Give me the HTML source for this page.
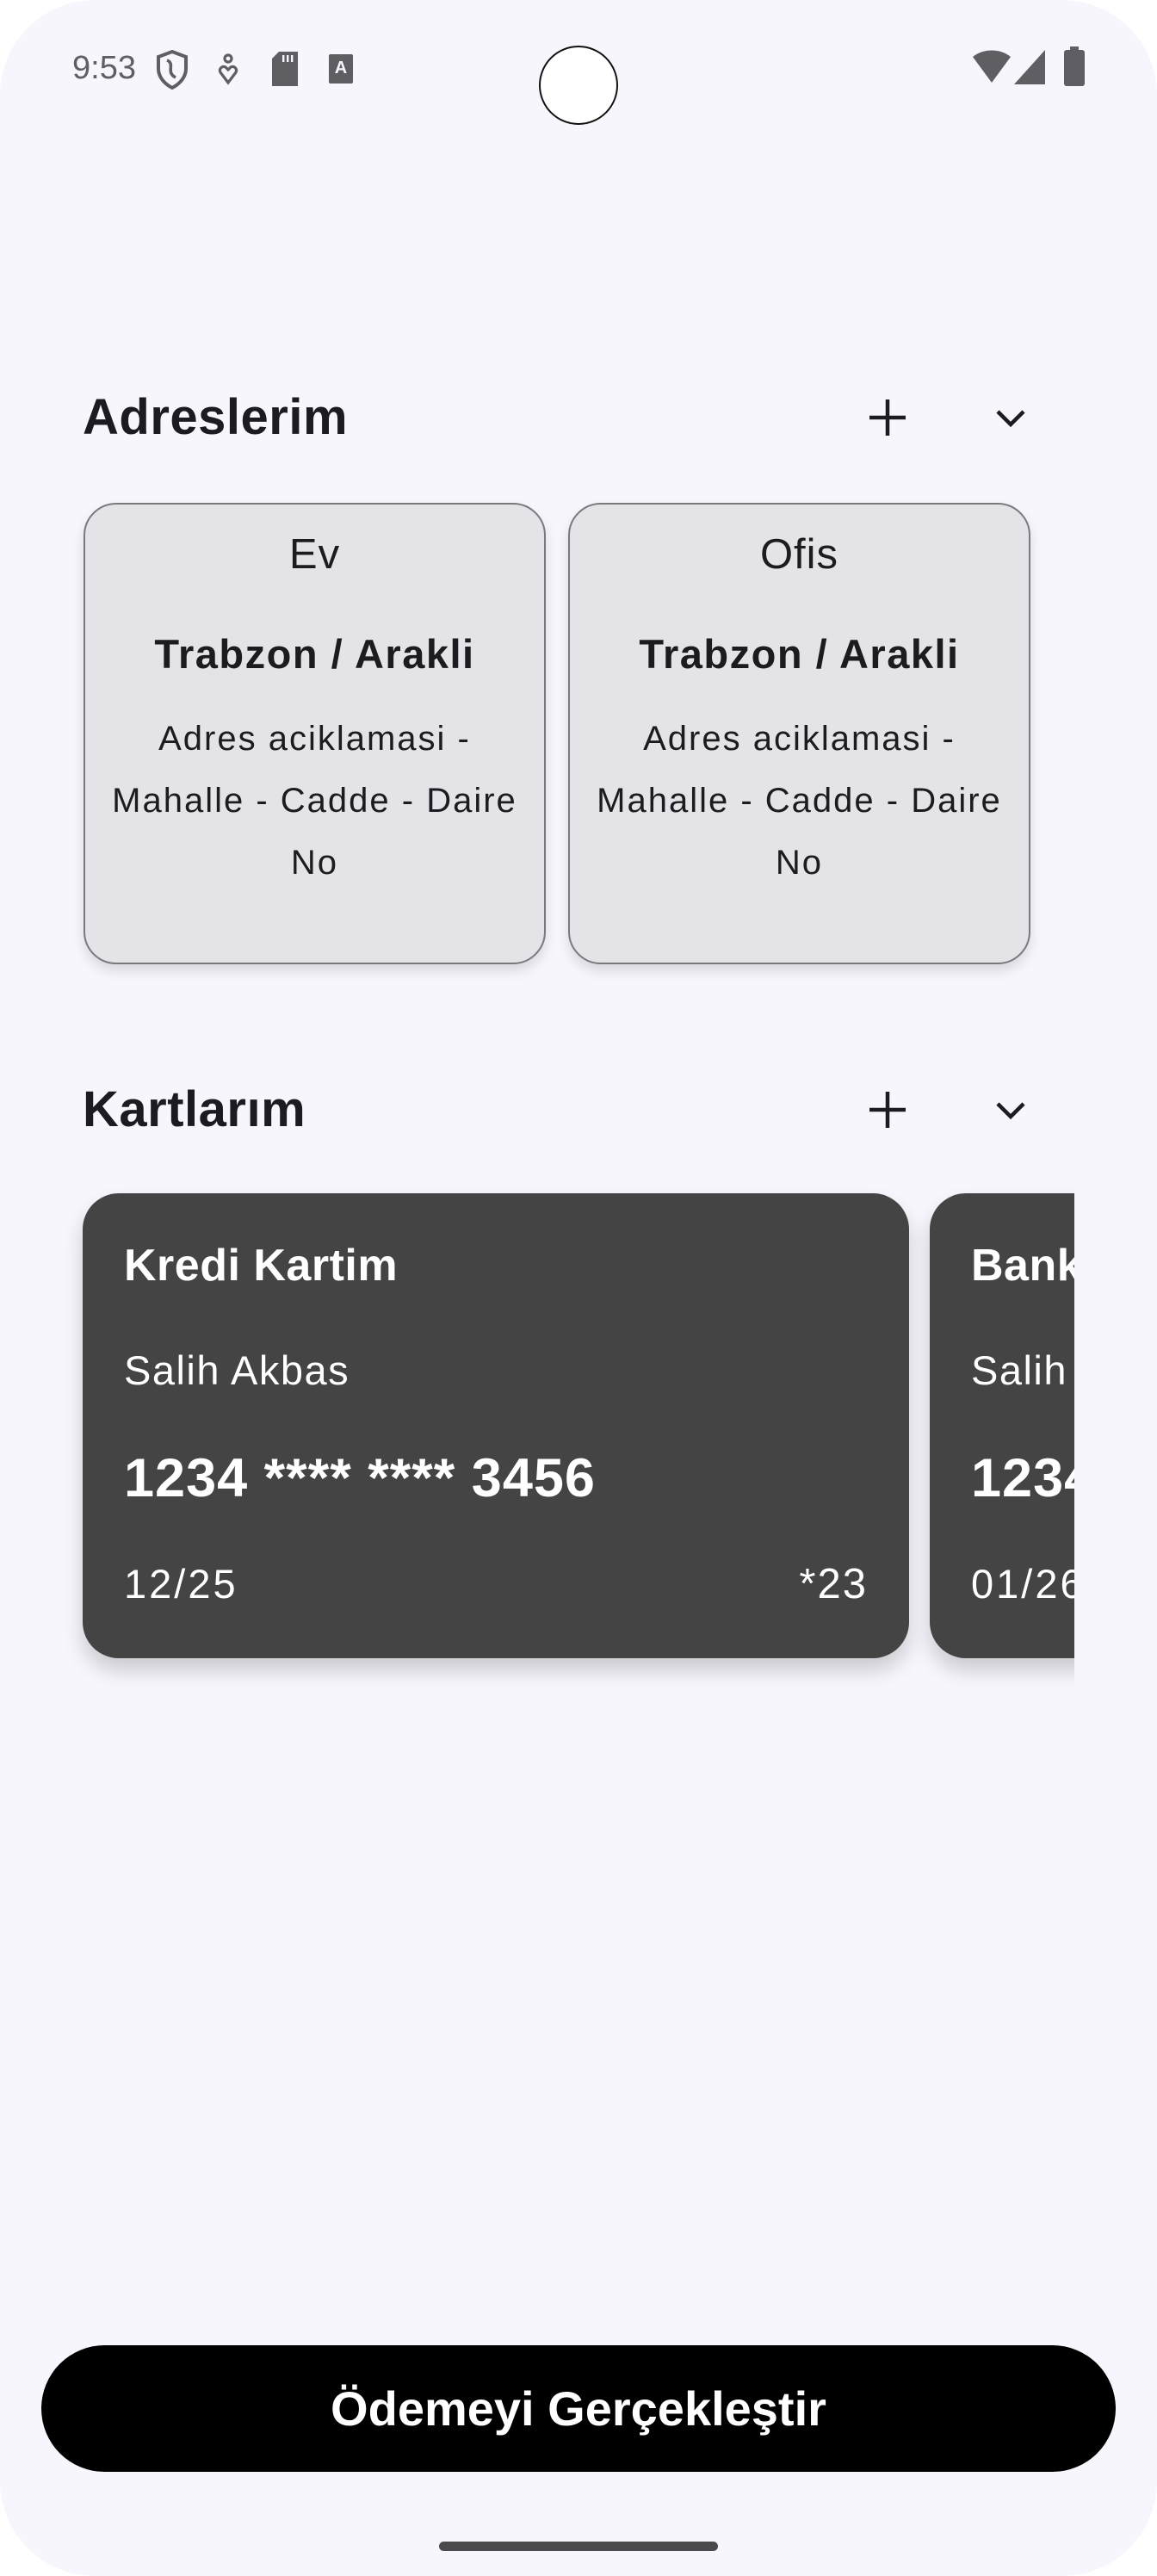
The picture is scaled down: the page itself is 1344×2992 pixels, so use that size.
<!DOCTYPE html>
<html><head><meta charset="utf-8"><style>
*{margin:0;padding:0;box-sizing:border-box}
html,body{width:1344px;height:2992px;background:#fff;overflow:hidden}
body{font-family:"Liberation Sans",sans-serif;position:relative}
.scr{position:absolute;left:0;top:0;width:1344px;height:2992px;background:#f7f6fc;border-radius:110px}
.a{position:absolute;white-space:nowrap}
.addr{position:absolute;top:584px;width:537px;height:536px;background:#e3e3e8;border:2.5px solid #7a7a7e;border-radius:38px;box-shadow:0 8px 14px rgba(0,0,0,0.12);text-align:center;color:#1c1b1f}
.addr .t{position:absolute;left:0;right:0;top:30px;font-size:49px;line-height:56px;letter-spacing:1px}
.addr .c{position:absolute;left:0;right:0;top:148px;font-size:47px;font-weight:bold;line-height:52px;letter-spacing:1.5px}
.addr .d{position:absolute;left:0;right:0;top:236px;font-size:40px;line-height:72px;letter-spacing:2px}
.card{position:absolute;top:1386px;height:540px;background:#444444;border-radius:42px;color:#fff;box-shadow:0 14px 24px rgba(0,0,0,0.18)}
.card .n{position:absolute;left:48px;top:54px;font-size:52px;font-weight:bold;line-height:60px;letter-spacing:0.5px}
.card .h{position:absolute;left:48px;top:180px;font-size:47px;line-height:52px;letter-spacing:1.5px}
.card .num{position:absolute;left:48px;top:296px;font-size:63px;font-weight:bold;line-height:70px;letter-spacing:1px}
.card .e{position:absolute;left:48px;top:428px;font-size:47px;line-height:52px;letter-spacing:3px}
.card .cv{position:absolute;right:48px;top:428px;font-size:49px;line-height:52px;letter-spacing:2px}
.hd{position:absolute;left:96px;font-size:58px;font-weight:bold;color:#1c1b1f;line-height:64px;letter-spacing:0.5px}
</style></head><body>
<div class="scr"></div>
<div class="a" style="left:84px;top:57px;font-size:38px;color:#5f5f63;line-height:44px">9:53</div>
<svg class="a" style="left:180px;top:58px" width="40" height="46" viewBox="0 0 20 23"><path d="M10 1 L18 4 V11 C18 16 14 20 10 22 C6 20 2 16 2 11 V4 Z" fill="none" stroke="#5f5f63" stroke-width="2"/><path d="M7 6 C12 8 6 13 12 16" fill="none" stroke="#5f5f63" stroke-width="1.8"/></svg>
<svg class="a" style="left:252px;top:62px" width="26" height="38" viewBox="0 0 13 19"><circle cx="6.5" cy="3" r="2" fill="none" stroke="#5f5f63" stroke-width="1.6"/><path d="M6.5 17 L2 11 C1 9 3 7 5 8 L6.5 9.5 L8 8 C10 7 12 9 11 11 Z" fill="none" stroke="#5f5f63" stroke-width="1.6"/></svg>
<svg class="a" style="left:316px;top:60px" width="30" height="40" viewBox="0 0 15 20"><path d="M4 0 H15 V20 H0 V4 Z" fill="#5f5f63"/><rect x="6" y="2" width="1.2" height="4" fill="#f7f6fc"/><rect x="8.5" y="2" width="1.2" height="4" fill="#f7f6fc"/><rect x="11" y="2" width="1.2" height="4" fill="#f7f6fc"/></svg>
<svg class="a" style="left:382px;top:63px" width="28" height="34" viewBox="0 0 14 17"><rect width="14" height="17" rx="1" fill="#5f5f63"/><text x="7" y="11" font-size="10" font-family="Liberation Sans" font-weight="bold" fill="#f7f6fc" text-anchor="middle">A</text></svg>
<svg class="a" style="left:1128px;top:58px" width="48" height="40" viewBox="0 0 24 20"><path d="M12 19 L1 4 C7 -1 17 -1 23 4 Z" fill="#5f5f63"/></svg>
<svg class="a" style="left:1178px;top:58px" width="36" height="40" viewBox="0 0 18 20"><path d="M18 0 V20 H0 Z" fill="#5f5f63"/></svg>
<svg class="a" style="left:1236px;top:54px" width="24" height="46" viewBox="0 0 12 23"><rect x="3.5" y="0" width="5" height="3" fill="#5f5f63"/><rect x="0" y="2" width="12" height="21" rx="1.5" fill="#5f5f63"/></svg>
<div class="a" style="left:626px;top:53px;width:92px;height:92px;border-radius:50%;background:#fff;border:2px solid #111"></div>

<div class="hd" style="top:453px">Adreslerim</div>
<svg class="a" style="left:1008px;top:462px" width="46" height="46" viewBox="0 0 46 46"><path d="M23 2 V44 M2 23 H44" stroke="#1c1b1f" stroke-width="4.5"/></svg>
<svg class="a" style="left:1156px;top:474px" width="36" height="24" viewBox="0 0 36 24"><path d="M3 4 L18 19 L33 4" fill="none" stroke="#1c1b1f" stroke-width="4.5"/></svg>

<div class="addr" style="left:97px">
<div class="t">Ev</div>
<div class="c">Trabzon / Arakli</div>
<div class="d">Adres aciklamasi -<br>Mahalle - Cadde - Daire<br>No</div>
</div>
<div class="addr" style="left:660px">
<div class="t">Ofis</div>
<div class="c">Trabzon / Arakli</div>
<div class="d">Adres aciklamasi -<br>Mahalle - Cadde - Daire<br>No</div>
</div>

<div class="hd" style="top:1257px">Kartlarım</div>
<svg class="a" style="left:1008px;top:1266px" width="46" height="46" viewBox="0 0 46 46"><path d="M23 2 V44 M2 23 H44" stroke="#1c1b1f" stroke-width="4.5"/></svg>
<svg class="a" style="left:1156px;top:1278px" width="36" height="24" viewBox="0 0 36 24"><path d="M3 4 L18 19 L33 4" fill="none" stroke="#1c1b1f" stroke-width="4.5"/></svg>

<div class="card" style="left:96px;width:960px">
<div class="n">Kredi Kartim</div>
<div class="h">Salih Akbas</div>
<div class="num">1234 **** **** 3456</div>
<div class="e">12/25</div>
<div class="cv">*23</div>
</div>
<div class="a" style="left:1060px;top:1370px;width:188px;height:640px;overflow:hidden">
<div class="card" style="left:20px;top:16px;width:960px">
<div class="n">Bank Kartim</div>
<div class="h">Salih Akbas</div>
<div class="num">1234 **** **** 7890</div>
<div class="e">01/26</div>
</div>
</div>

<div class="a" style="left:48px;top:2724px;width:1248px;height:147px;border-radius:74px;background:#000;color:#fff;font-size:56px;font-weight:bold;text-align:center;line-height:147px">Ödemeyi Gerçekleştir</div>
<div class="a" style="left:510px;top:2952px;width:324px;height:11px;border-radius:6px;background:#4a4a4e"></div>
</body></html>
